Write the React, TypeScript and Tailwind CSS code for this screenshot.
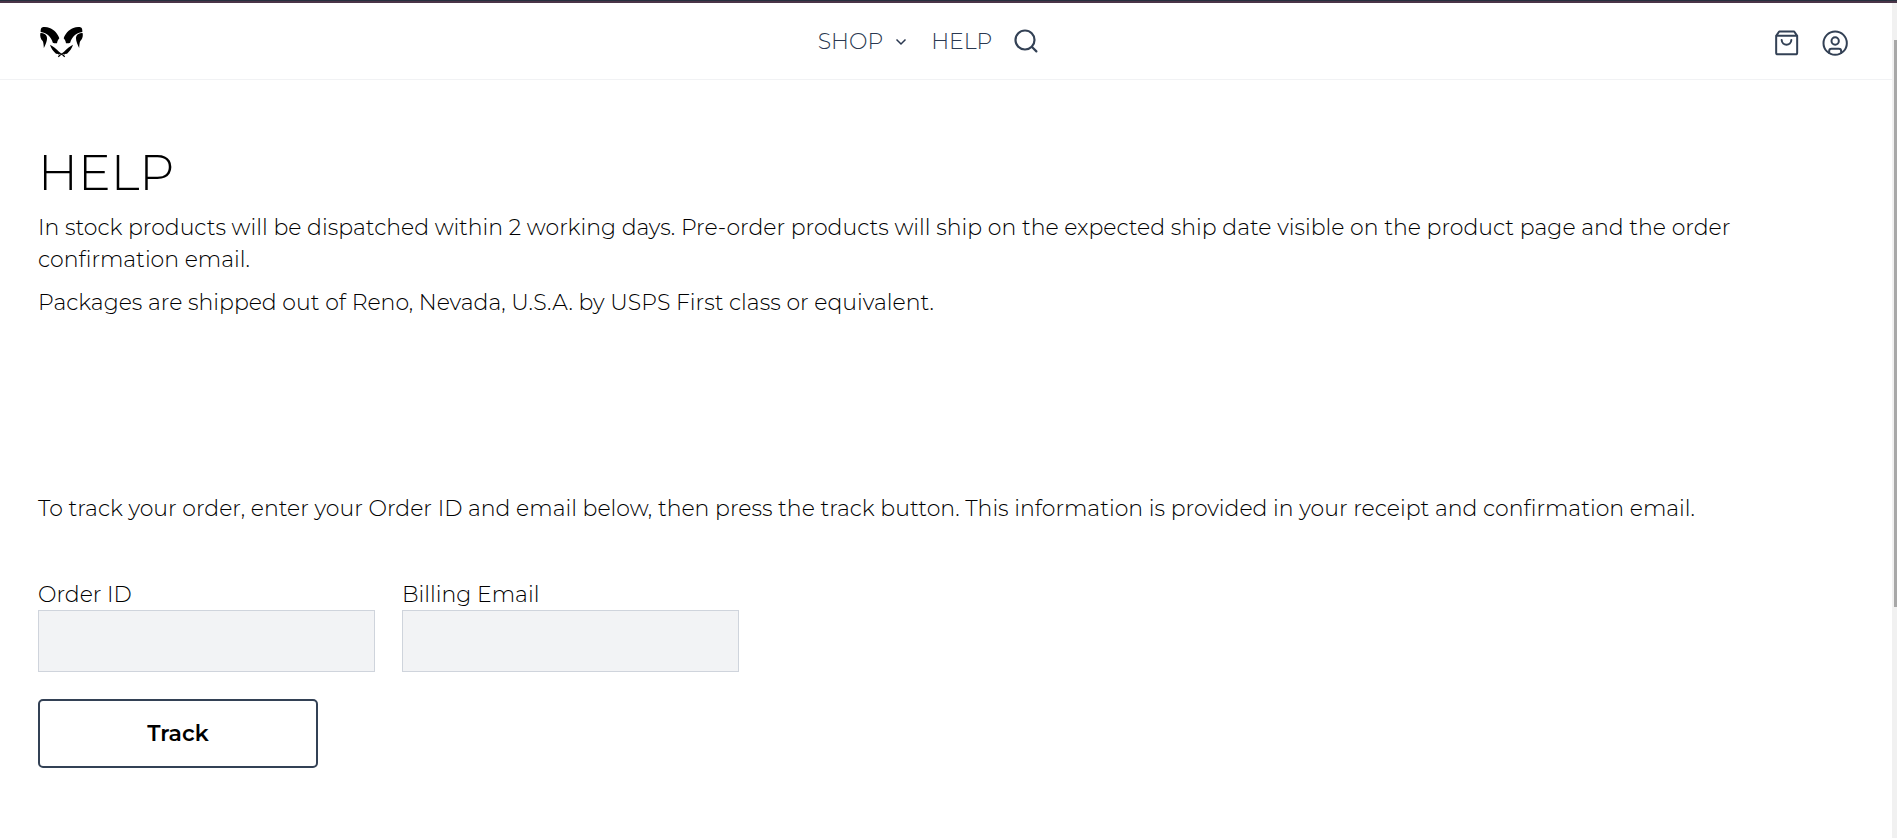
import React from "react";

function RamLogo() {
  return (
    <svg viewBox="114 75 135 99" className="h-[33px] w-[45px]" fill="#000" aria-hidden="true">
      <defs>
        <g id="ram-half">
          <path d="M122 96C121.500 89 123 84 126 82.500C132 80.500 141 81 149 84C163 89 173 101 178 115C174.500 119 172.500 123 171 129.500C167 130.500 163 130 158.500 128C153 111 142 98 122 96Z" />
          <path d="M121 99.500C129 98.500 138 102.500 140.500 110C143 120 137 133 131.500 144C131 135 130.500 128 128 123C122 117 119.500 109 121 99.500Z" />
          <path d="M150 134.500C158 138 168 146 177 155.500L183 160L190 164.500L193 164L192.500 166.500L195.500 169.500L192.500 171.500L188.500 167.500L180 161L176.500 164.500L174.500 162L168 161C160 155 153 145 150 134.500Z" />
        </g>
      </defs>
      <use href="#ram-half" />
      <use href="#ram-half" transform="translate(369 0) scale(-1 1)" />
    </svg>
  );
}

function BagIcon() {
  return (
    <svg viewBox="105 92 72 78" className="h-[26px] w-6" fill="none" stroke="#334155" strokeWidth="6" strokeLinejoin="round" strokeLinecap="round" aria-hidden="true">
      <path d="M108.500 109.500V160Q108.500 165 113.500 165H166.500Q171.500 165 171.500 160V109.500ZM108.500 109.500L117.500 96.500H162.500L171.500 109.500" />
      <path d="M125 122C126 141 153 141 154 122" />
    </svg>
  );
}

function AccountIcon() {
  return (
    <svg viewBox="247 91 78 78" className="size-[26px]" fill="none" stroke="#334155" strokeWidth="6" strokeLinecap="round" aria-hidden="true">
      <circle cx="286.500" cy="130.500" r="35" />
      <circle cx="286.500" cy="124" r="11" />
      <path d="M268.500 160V154Q268.500 147 275.500 147H297.500Q304.500 147 304.500 154V160" />
    </svg>
  );
}

function SearchIcon() {
  return (
    <svg viewBox="0 0 24 24" className="size-6" fill="none" stroke="#334155" strokeWidth="2.200" strokeLinecap="round" aria-hidden="true">
      <circle cx="11" cy="11" r="9.500" />
      <path d="M18 18L22.400 22.400" />
    </svg>
  );
}

function Field({ id, label, type }: { id: string; label: string; type: string }) {
  return (
    <div className="w-[337px]">
      <label htmlFor={id} className="block h-[31px]">
        {label}
      </label>
      <input id={id} type={type} className="block h-[62px] w-full border border-[#cfd4dc] bg-[#f2f3f5] px-4 outline-none" />
    </div>
  );
}

export default function App() {
  return (
    <div className="flex min-h-screen flex-col bg-white font-['Montserrat','Inter',sans-serif] text-[22px] leading-8 font-light text-black">
      <div className="h-[3px] border-t border-[#27303f] bg-[#4a3548]" />
      <div className="flex flex-1">
        <div className="min-w-0 flex-1">
          <header className="flex h-[77px] items-center justify-between border-b border-[#f1f2f4] px-[38px]">
            <a href="#" aria-label="Home">
              <RamLogo />
            </a>
            <nav className="flex items-center pt-px pr-0.5 text-[#2a3850]">
              <button type="button" className="flex items-center gap-3">
                SHOP
                <svg viewBox="0 0 12 8" className="h-2 w-3" fill="none" stroke="currentColor" strokeWidth="1.500" aria-hidden="true">
                  <path d="M1.500 1.500L6 6L10.500 1.500" />
                </svg>
              </button>
              <a href="#help" className="ml-6">
                HELP
              </a>
              <button type="button" aria-label="Search" className="ml-[22px] pb-0.5">
                <SearchIcon />
              </button>
            </nav>
            <div className="flex items-center gap-[23px] pt-1 pr-1.5">
              <button type="button" aria-label="Cart">
                <BagIcon />
              </button>
              <button type="button" aria-label="Account">
                <AccountIcon />
              </button>
            </div>
          </header>
          <main className="px-[38px] pt-[63px]">
            <h1 className="text-[49px] leading-[60px]">HELP</h1>
            <p className="mt-[9px] max-w-[1720px]">
              In stock products will be dispatched within 2 working days. Pre-order products will ship on the expected ship date visible on the product page and the order confirmation email.
            </p>
            <p className="mt-[11px]">Packages are shipped out of Reno, Nevada, U.S.A. by USPS First class or equivalent.</p>
            <form className="mt-[174px]">
              <p>
                To track your order, enter your Order ID and email below, then press the track button. This information is provided in your receipt and confirmation email.
              </p>
              <div className="mt-[54px] flex flex-wrap gap-[27px]">
                <Field id="order-id" label="Order ID" type="text" />
                <Field id="billing-email" label="Billing Email" type="email" />
              </div>
              <button type="button" className="mt-[27px] h-[69px] w-[280px] rounded-[5px] border-2 border-[#334155] font-semibold">
                Track
              </button>
            </form>
          </main>
        </div>
        <div className="flex w-[5px] flex-col items-end bg-[#f1f1f1] pt-[37px]" aria-hidden="true">
          <div className="h-[567px] w-[3px] bg-[#a8a8a8]" />
        </div>
      </div>
    </div>
  );
}
